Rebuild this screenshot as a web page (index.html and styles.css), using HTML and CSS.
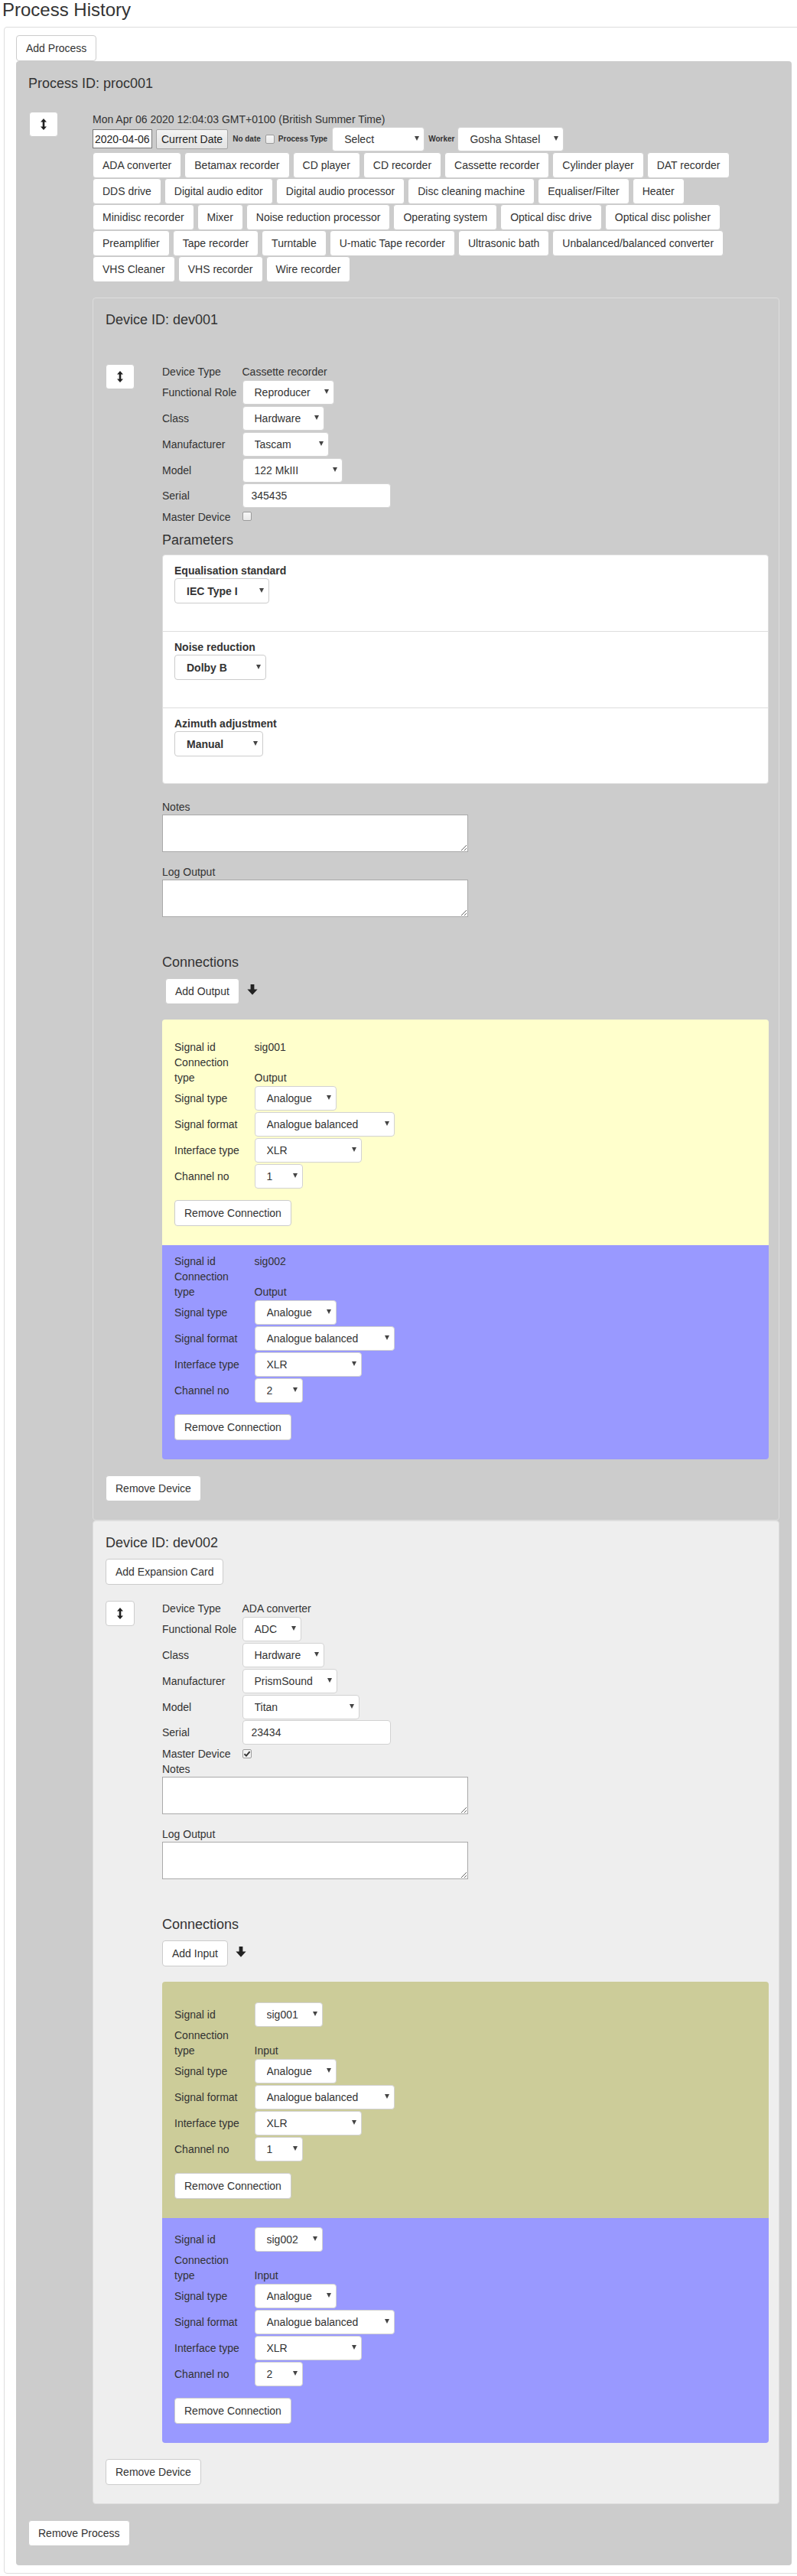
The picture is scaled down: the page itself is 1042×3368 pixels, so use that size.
FILE: index.html
```html
<!DOCTYPE html>
<html lang="en">
<head>
<meta charset="utf-8">
<title>Process History</title>
<link rel="stylesheet" href="styles.css">
</head>
<body>
<h2 class="page-title">Process History</h2>
<div class="history">
  <button class="btn" type="button">Add Process</button>
  <section class="process">
    <h4 class="heading">Process ID: proc001</h4>
    <div class="proc-row">
      <div class="proc-handle-col">
        <button class="handle" type="button" aria-label="Move"><svg class="icon-resize" viewBox="0 0 8 15" width="8" height="15"><path d="M4 0L8 4.6H5.3V10.4H8L4 15L0 10.4H2.7V4.6H0Z"/></svg></button>
      </div>
      <div class="proc-main">
        <div class="date-text">Mon Apr 06 2020 12:04:03 GMT+0100 (British Summer Time)</div>
        <div class="proc-controls">
          <input class="date-input" type="text" value="2020-04-06">
          <button class="native-btn" type="button">Current Date</button>
          <label class="mini-label no-date">No date</label>
          <span class="chk chk-top"></span>
          <label class="mini-label pt-label">Process Type</label>
          <span class="sel w121 top-sel"><select><option>Select</option></select></span>
          <label class="mini-label worker-label">Worker</label>
          <span class="sel w139 worker-sel"><select><option>Gosha Shtasel</option></select></span>
        </div>
        <div class="type-buttons">
          <button class="btn" type="button">ADA converter</button>
          <button class="btn" type="button">Betamax recorder</button>
          <button class="btn" type="button">CD player</button>
          <button class="btn" type="button">CD recorder</button>
          <button class="btn" type="button">Cassette recorder</button>
          <button class="btn" type="button">Cylinder player</button>
          <button class="btn" type="button">DAT recorder</button>
          <button class="btn" type="button">DDS drive</button>
          <button class="btn" type="button">Digital audio editor</button>
          <button class="btn" type="button">Digital audio processor</button>
          <button class="btn" type="button">Disc cleaning machine</button>
          <button class="btn" type="button">Equaliser/Filter</button>
          <button class="btn" type="button">Heater</button>
          <button class="btn" type="button">Minidisc recorder</button>
          <button class="btn" type="button">Mixer</button>
          <button class="btn" type="button">Noise reduction processor</button>
          <button class="btn" type="button">Operating system</button>
          <button class="btn" type="button">Optical disc drive</button>
          <button class="btn" type="button">Optical disc polisher</button>
          <button class="btn" type="button">Preamplifier</button>
          <button class="btn" type="button">Tape recorder</button>
          <button class="btn" type="button">Turntable</button>
          <button class="btn" type="button">U-matic Tape recorder</button>
          <button class="btn" type="button">Ultrasonic bath</button>
          <button class="btn" type="button">Unbalanced/balanced converter</button>
          <button class="btn" type="button">VHS Cleaner</button>
          <button class="btn" type="button">VHS recorder</button>
          <button class="btn" type="button">Wire recorder</button>
        </div>

        <section class="device">
          <h4 class="heading">Device ID: dev001</h4>
          <div class="device-body device-body-spaced">
            <div class="device-handle-col">
              <button class="handle" type="button" aria-label="Move"><svg class="icon-resize" viewBox="0 0 8 15" width="8" height="15"><path d="M4 0L8 4.6H5.3V10.4H8L4 15L0 10.4H2.7V4.6H0Z"/></svg></button>
            </div>
            <div class="device-form">
              <div class="field"><label class="field-label">Device Type</label><span class="field-value">Cassette recorder</span></div>
              <div class="field sel-row"><label class="field-label">Functional Role</label><span class="sel w120"><select><option>Reproducer</option></select></span></div>
              <div class="field sel-row"><label class="field-label">Class</label><span class="sel w107"><select><option>Hardware</option></select></span></div>
              <div class="field sel-row"><label class="field-label">Manufacturer</label><span class="sel w113"><select><option>Tascam</option></select></span></div>
              <div class="field sel-row"><label class="field-label">Model</label><span class="sel w131"><select><option>122 MkIII</option></select></span></div>
              <div class="field input-row"><label class="field-label">Serial</label><input class="text-input" type="text" value="345435"></div>
              <div class="field"><label class="field-label">Master Device</label><span class="chk"></span></div>

              <h4 class="heading params-heading">Parameters</h4>
              <div class="panel">
                <div class="param">
                  <label class="param-label">Equalisation standard</label>
                  <span class="sel psel w124"><select><option>IEC Type I</option></select></span>
                </div>
                <div class="param">
                  <label class="param-label">Noise reduction</label>
                  <span class="sel psel w120"><select><option>Dolby B</option></select></span>
                </div>
                <div class="param param-last">
                  <label class="param-label">Azimuth adjustment</label>
                  <span class="sel psel w116"><select><option>Manual</option></select></span>
                </div>
              </div>

              <label class="block-label">Notes</label>
              <textarea class="note-area"></textarea>
              <label class="block-label">Log Output</label>
              <textarea class="note-area log-area"></textarea>

              <h4 class="heading conn-heading">Connections</h4>
              <div class="conn-actions">
                <button class="btn add-output" type="button">Add Output</button>
                <svg class="icon-down" viewBox="0 0 14 14" width="14" height="14"><path d="M4.6 0H9.4V6.4H13.6L7 13.8L0.4 6.4H4.6Z"/></svg>
              </div>
              <div class="conn-list">
                <div class="conn conn-yellow">
                  <div class="field"><label class="field-label">Signal id</label><span class="field-value">sig001</span></div>
                  <div class="field field-wrap"><label class="field-label">Connection type</label><span class="field-value">Output</span></div>
                  <div class="field sel-row"><label class="field-label">Signal type</label><span class="sel w107"><select><option>Analogue</option></select></span></div>
                  <div class="field sel-row"><label class="field-label">Signal format</label><span class="sel w183"><select><option>Analogue balanced</option></select></span></div>
                  <div class="field sel-row"><label class="field-label">Interface type</label><span class="sel w140"><select><option>XLR</option></select></span></div>
                  <div class="field sel-row"><label class="field-label">Channel no</label><span class="sel w63"><select><option>1</option></select></span></div>
                  <div class="conn-remove"><button class="btn" type="button">Remove Connection</button></div>
                </div>
                <div class="conn conn-blue">
                  <div class="field"><label class="field-label">Signal id</label><span class="field-value">sig002</span></div>
                  <div class="field field-wrap"><label class="field-label">Connection type</label><span class="field-value">Output</span></div>
                  <div class="field sel-row"><label class="field-label">Signal type</label><span class="sel w107"><select><option>Analogue</option></select></span></div>
                  <div class="field sel-row"><label class="field-label">Signal format</label><span class="sel w183"><select><option>Analogue balanced</option></select></span></div>
                  <div class="field sel-row"><label class="field-label">Interface type</label><span class="sel w140"><select><option>XLR</option></select></span></div>
                  <div class="field sel-row"><label class="field-label">Channel no</label><span class="sel w63"><select><option>2</option></select></span></div>
                  <div class="conn-remove"><button class="btn" type="button">Remove Connection</button></div>
                </div>
              </div>
            </div>
          </div>
          <div class="device-actions"><button class="btn" type="button">Remove Device</button></div>
        </section>

        <section class="device device-alt">
          <h4 class="heading">Device ID: dev002</h4>
          <div class="device-toolbar"><button class="btn" type="button">Add Expansion Card</button></div>
          <div class="device-body">
            <div class="device-handle-col">
              <button class="handle" type="button" aria-label="Move"><svg class="icon-resize" viewBox="0 0 8 15" width="8" height="15"><path d="M4 0L8 4.6H5.3V10.4H8L4 15L0 10.4H2.7V4.6H0Z"/></svg></button>
            </div>
            <div class="device-form">
              <div class="field"><label class="field-label">Device Type</label><span class="field-value">ADA converter</span></div>
              <div class="field sel-row"><label class="field-label">Functional Role</label><span class="sel w77"><select><option>ADC</option></select></span></div>
              <div class="field sel-row"><label class="field-label">Class</label><span class="sel w107"><select><option>Hardware</option></select></span></div>
              <div class="field sel-row"><label class="field-label">Manufacturer</label><span class="sel w124"><select><option>PrismSound</option></select></span></div>
              <div class="field sel-row"><label class="field-label">Model</label><span class="sel w153"><select><option>Titan</option></select></span></div>
              <div class="field input-row"><label class="field-label">Serial</label><input class="text-input" type="text" value="23434"></div>
              <div class="field"><label class="field-label">Master Device</label><span class="chk chk-on"><svg viewBox="0 0 10 10" width="10" height="10"><path d="M1.5 5.2L4 7.6L8.6 2.2" fill="none" stroke="#333" stroke-width="1.9"/></svg></span></div>

              <label class="block-label">Notes</label>
              <textarea class="note-area"></textarea>
              <label class="block-label">Log Output</label>
              <textarea class="note-area log-area"></textarea>

              <h4 class="heading conn-heading">Connections</h4>
              <div class="conn-actions">
                <button class="btn" type="button">Add Input</button>
                <svg class="icon-down" viewBox="0 0 14 14" width="14" height="14"><path d="M4.6 0H9.4V6.4H13.6L7 13.8L0.4 6.4H4.6Z"/></svg>
              </div>
              <div class="conn-list">
                <div class="conn conn-olive">
                  <div class="field sel-row"><label class="field-label">Signal id</label><span class="sel w89"><select><option>sig001</option></select></span></div>
                  <div class="field field-wrap"><label class="field-label">Connection type</label><span class="field-value">Input</span></div>
                  <div class="field sel-row"><label class="field-label">Signal type</label><span class="sel w107"><select><option>Analogue</option></select></span></div>
                  <div class="field sel-row"><label class="field-label">Signal format</label><span class="sel w183"><select><option>Analogue balanced</option></select></span></div>
                  <div class="field sel-row"><label class="field-label">Interface type</label><span class="sel w140"><select><option>XLR</option></select></span></div>
                  <div class="field sel-row"><label class="field-label">Channel no</label><span class="sel w63"><select><option>1</option></select></span></div>
                  <div class="conn-remove"><button class="btn" type="button">Remove Connection</button></div>
                </div>
                <div class="conn conn-blue">
                  <div class="field sel-row"><label class="field-label">Signal id</label><span class="sel w89"><select><option>sig002</option></select></span></div>
                  <div class="field field-wrap"><label class="field-label">Connection type</label><span class="field-value">Input</span></div>
                  <div class="field sel-row"><label class="field-label">Signal type</label><span class="sel w107"><select><option>Analogue</option></select></span></div>
                  <div class="field sel-row"><label class="field-label">Signal format</label><span class="sel w183"><select><option>Analogue balanced</option></select></span></div>
                  <div class="field sel-row"><label class="field-label">Interface type</label><span class="sel w140"><select><option>XLR</option></select></span></div>
                  <div class="field sel-row"><label class="field-label">Channel no</label><span class="sel w63"><select><option>2</option></select></span></div>
                  <div class="conn-remove"><button class="btn" type="button">Remove Connection</button></div>
                </div>
              </div>
            </div>
          </div>
          <div class="device-actions"><button class="btn" type="button">Remove Device</button></div>
        </section>
      </div>
    </div>
    <div class="process-actions"><button class="btn" type="button">Remove Process</button></div>
  </section>
</div>
</body>
</html>
```

FILE: styles.css
```css
* {
  box-sizing: border-box;
}

html {
  overflow-x: hidden;
}

body {
  margin: 0;
  padding: 0 0 0 5px;
  font-family: "Liberation Sans", Arial, Helvetica, sans-serif;
  font-size: 14px;
  line-height: 20px;
  color: #333;
  background: #fff;
  overflow-x: hidden;
}

.page-title {
  margin: 0 0 8.6px -2px;
  font-size: 24px;
  line-height: 26.4px;
  font-weight: 400;
}

.history {
  width: 1046px;
  border: 1px solid #ddd;
  border-radius: 4px;
  padding: 10px 15px;
}

.btn {
  display: inline-block;
  height: 34px;
  margin: 0;
  padding: 6px 12px;
  font: inherit;
  line-height: 20px;
  color: #333;
  background: #fff;
  border: 1px solid #ccc;
  border-radius: 4px;
  white-space: nowrap;
  cursor: pointer;
}

.process {
  background: #ccc;
  border-radius: 4px;
  padding: 20px 16px 25px;
}

.heading {
  margin: 0;
  font-size: 18px;
  line-height: 19.8px;
  font-weight: 400;
}

.process > .heading {
  margin-bottom: 26px;
}

.proc-row {
  display: flex;
}

.proc-handle-col {
  flex: none;
  width: 84px;
}

.proc-handle-col .handle {
  margin-left: 1px;
}

.handle {
  display: flex;
  align-items: center;
  justify-content: center;
  width: 38px;
  height: 33px;
  padding: 0;
  background: #fff;
  border: 1px solid #ccc;
  border-radius: 4px;
}

.icon-resize {
  display: block;
  fill: #222;
}

.proc-main {
  flex: 1;
  min-width: 0;
}

.date-text {
  height: 20px;
  white-space: nowrap;
}

.proc-controls {
  display: flex;
  align-items: center;
  height: 32px;
}

.date-input {
  width: 78px;
  height: 25px;
  margin: 0;
  padding: 0 2px;
  font: inherit;
  color: #222;
  background: #fff;
  border: 1px solid #7a7a7a;
}

.native-btn {
  height: 26px;
  margin: 0 0 0 5px;
  padding: 0 6px;
  font: inherit;
  line-height: 20px;
  color: #222;
  background: linear-gradient(#f3f3f3, #e3e3e3);
  border: 1px solid #a5a5a5;
  border-radius: 2px;
}

.mini-label {
  font-size: 10px;
  font-weight: 700;
  line-height: 12px;
  white-space: nowrap;
}

.no-date {
  margin-left: 6px;
}

.chk-top {
  margin-left: 6px;
}

.pt-label {
  margin-left: 5px;
}

.top-sel {
  margin-left: 6px;
}

.worker-label {
  margin-left: 5px;
}

.worker-sel {
  margin-left: 4px;
}

.type-buttons {
  display: flex;
  flex-wrap: wrap;
  column-gap: 4px;
  margin-top: 1px;
}

/* select boxes */
.sel {
  position: relative;
  display: inline-block;
  flex: none;
}

.sel select {
  -webkit-appearance: none;
  appearance: none;
  display: inline-block;
  width: 100%;
  height: 32px;
  margin: 0;
  padding: 0 18px 0 15px;
  font: inherit;
  color: #333;
  background: #fff;
  border: 1px solid #d2d2d2;
  border-radius: 4px;
}

.sel::after {
  content: "";
  position: absolute;
  right: 7px;
  top: 50%;
  margin-top: -4px;
  border-left: 3px solid transparent;
  border-right: 3px solid transparent;
  border-top: 6px solid #444;
  pointer-events: none;
}

.w63 { width: 63px; }
.w77 { width: 77px; }
.w89 { width: 89px; }
.w107 { width: 107px; }
.w113 { width: 113px; }
.w116 { width: 116px; }
.w120 { width: 120px; }
.w121 { width: 121px; }
.w124 { width: 124px; }
.w131 { width: 131px; }
.w139 { width: 139px; }
.w140 { width: 140px; }
.w153 { width: 153px; }
.w183 { width: 183px; }

/* checkbox */
.chk {
  display: inline-block;
  flex: none;
  width: 12px;
  height: 12px;
  background: linear-gradient(#f7f7f7, #e9e9e9);
  border: 1px solid #9c9c9c;
  border-radius: 2px;
}

.chk-on {
  display: inline-flex;
  align-items: center;
  justify-content: center;
  background: #f4f4f4;
}

.chk-on svg {
  display: block;
}

/* devices */
.device {
  display: flex;
  flex-direction: column;
  align-items: stretch;
  margin-top: 20px;
  padding: 19px 13px 24px 16px;
  background: #ccc;
  border: 1px solid #ddd;
  border-radius: 4px;
}

.device + .device {
  margin-top: 0;
}

.device-alt {
  background: #eee;
}

.device > .heading {
  margin-bottom: 10px;
}

.device-toolbar {
  display: flex;
}

.device-body {
  display: flex;
  margin-top: 21px;
}

.device-body-spaced {
  margin-top: 37px;
}

.device-handle-col {
  flex: none;
  width: 74px;
}

.device-form {
  flex: 1;
  min-width: 0;
}

.field {
  display: flex;
  align-items: baseline;
}

.field-label {
  flex: none;
  width: 100px;
  margin-right: 4.5px;
}

.field-value {
  white-space: nowrap;
}

.sel-row {
  padding: 1px 0;
}

.input-row {
  padding: 0 0 2px;
}

.field-wrap {
  align-items: flex-end;
}

.text-input {
  width: 194px;
  height: 32px;
  margin: 0;
  padding: 0 11px;
  font: inherit;
  color: #333;
  background: #fff;
  border: 1px solid #d2d2d2;
  border-radius: 4px;
}

.params-heading {
  margin: 11px 0 9px;
}

.panel {
  margin-bottom: 20px;
  background: #fff;
  border: 1px solid #ddd;
  border-radius: 4px;
}

.param {
  display: flex;
  flex-direction: column;
  align-items: flex-start;
  padding: 10px 15px 36px;
  border-top: 1px solid #ddd;
}

.param:first-child {
  border-top: 0;
}

.param-last {
  padding-bottom: 35px;
}

.param-label {
  font-weight: 700;
}

.psel select {
  height: 33px;
  font-weight: 700;
  border-color: #ccc;
}

.block-label {
  display: block;
}

.note-area {
  display: block;
  width: 400px;
  height: 49px;
  margin: 0 0 16px;
  padding: 2px;
  font: inherit;
  background: #fff;
  border: 1px solid #a9a9a9;
  border-radius: 0;
}

.log-area {
  margin-bottom: 50px;
}

.conn-heading {
  margin-bottom: 10px;
}

.conn-actions {
  display: flex;
  align-items: center;
}

.add-output {
  margin-left: 4px;
}

.icon-down {
  display: block;
  margin: 0 0 4px 10px;
  fill: #222;
}

.conn-list {
  margin-top: 20px;
  border-radius: 4px;
  overflow: hidden;
}

.conn {
  padding: 11px 16px 25px;
}

.conn:first-child {
  padding-top: 26px;
}

.conn .field-label {
  width: 95px;
  margin-right: 9.5px;
}

.conn-yellow {
  background: #ffffcc;
}

.conn-blue {
  background: #9999ff;
}

.conn-olive {
  background: #cccc99;
}

.conn-remove {
  display: flex;
  margin-top: 14px;
}

.device-actions {
  display: flex;
  margin-top: 21px;
}

.process-actions {
  display: flex;
  margin-top: 21px;
}
```
